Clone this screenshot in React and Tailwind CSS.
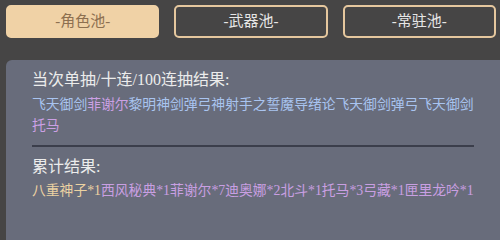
import React from "react";

const POOLS = [
  { name: "-角色池-", active: true },
  { name: "-武器池-", active: false },
  { name: "-常驻池-", active: false },
];

// 当次抽卡结果，颜色按星级
const CURRENT = [
  { text: "飞天御剑", c: "text-[#a9c4f0]" },
  { text: "菲谢尔", c: "text-[#cba0e4]" },
  { text: "黎明神剑", c: "text-[#a9c4f0]" },
  { text: "弹弓", c: "text-[#a9c4f0]" },
  { text: "神射手之誓", c: "text-[#a9c4f0]" },
  { text: "魔导绪论", c: "text-[#a9c4f0]" },
  { text: "飞天御剑", c: "text-[#a9c4f0]" },
  { text: "弹弓", c: "text-[#a9c4f0]" },
  { text: "飞天御剑", c: "text-[#a9c4f0]" },
  { text: "托马", c: "text-[#cba0e4]" },
];

const TOTAL = [
  { text: "八重神子", n: 1, c: "text-[#ecd2a2]" },
  { text: "西风秘典", n: 1, c: "text-[#c99fe2]" },
  { text: "菲谢尔", n: 7, c: "text-[#c99fe2]" },
  { text: "迪奥娜", n: 2, c: "text-[#c99fe2]" },
  { text: "北斗", n: 1, c: "text-[#c99fe2]" },
  { text: "托马", n: 3, c: "text-[#c99fe2]" },
  { text: "弓藏", n: 1, c: "text-[#c99fe2]" },
  { text: "匣里龙吟", n: 1, c: "text-[#c99fe2]" },
];

export default function App() {
  return (
    <div
      className="min-h-screen bg-[#464545] flex flex-col overflow-hidden"
      style={{ fontFamily: '"Liberation Serif", "Noto Sans CJK SC", serif' }}
    >
      <div className="flex gap-[15px] pl-[6px] pr-[4px] pt-[5px]">
        {POOLS.map((p) =>
          p.active ? (
            <button
              key={p.name}
              className="flex-1 h-[33px] rounded-[5px] border-2 border-[#f0d2a6] bg-[#f0d2a6] text-[#8d7050] text-[15px] leading-none"
            >
              {p.name}
            </button>
          ) : (
            <button
              key={p.name}
              className="flex-1 h-[33px] rounded-[5px] border-2 border-[#e5c79e] bg-transparent text-[#e6e6e6] text-[15px] leading-none"
            >
              {p.name}
            </button>
          ),
        )}
      </div>

      <div className="flex-1 mt-[22px] ml-[6px] rounded-tl-[6px] bg-[#686c7b] pl-[26px] pr-[20px] pt-[8px] pb-4">
        <div className="text-base leading-6 text-[#ececec]">
          当次单抽/十连/100连抽结果:
        </div>
        <div className="mt-[2px] w-[446px] text-[13.8px] leading-[21px]">
          {CURRENT.map((r, i) => (
            <span key={i} className={r.c}>
              {r.text}
            </span>
          ))}
        </div>

        <div className="mt-[9px] w-[442px] h-[2px] bg-[#3b3e4b]" />

        <div className="mt-[8px] text-base leading-6 text-[#ececec]">
          累计结果:
        </div>
        <div className="mt-[1px] text-[13.8px] leading-[21px]">
          {TOTAL.map((r, i) => (
            <span key={i} className={r.c}>
              {r.text}*{r.n}
            </span>
          ))}
        </div>
      </div>
    </div>
  );
}
